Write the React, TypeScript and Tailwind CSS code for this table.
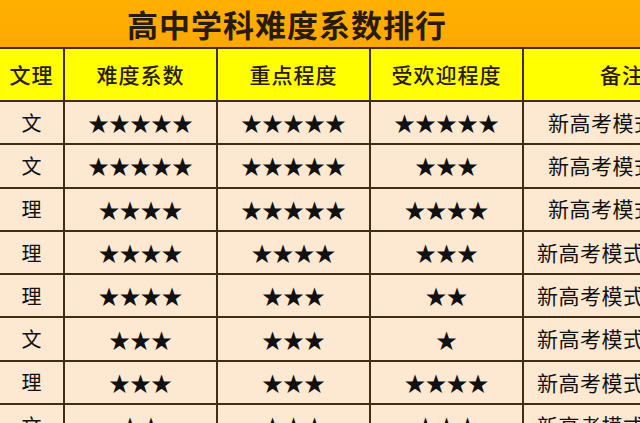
const font = { fontFamily: '"Noto Sans CJK SC", "Noto Sans", sans-serif' };

type Row = { kind: string; diff: number; key: number; pop: number; wide: boolean };

const rows: Row[] = [
  { kind: "文", diff: 5, key: 5, pop: 5, wide: false },
  { kind: "文", diff: 5, key: 5, pop: 3, wide: false },
  { kind: "理", diff: 4, key: 5, pop: 4, wide: false },
  { kind: "理", diff: 4, key: 4, pop: 3, wide: true },
  { kind: "理", diff: 4, key: 3, pop: 2, wide: true },
  { kind: "文", diff: 3, key: 3, pop: 1, wide: true },
  { kind: "理", diff: 3, key: 3, pop: 4, wide: true },
  { kind: "文", diff: 2, key: 3, pop: 3, wide: true },
];

const headers = ["文理", "难度系数", "重点程度", "受欢迎程度"];

function Stars({ n }: { n: number }) {
  return (
    <div className="flex items-center justify-center bg-[#fde8d2] text-[21px] leading-none text-[#111]">
      {"★".repeat(n)}
    </div>
  );
}

export default function App() {
  return (
    <div className="w-[640px] h-[423px] overflow-hidden bg-[#fde8d2]" style={font}>
      <div className="h-[47px] bg-gradient-to-b from-[#ffb000] to-[#ffa800] flex items-center pl-[127px]">
        <h1 className="text-[31px] font-bold text-[#2a1a08] tracking-[1px] leading-none">
          高中学科难度系数排行
        </h1>
      </div>
      <div className="grid grid-cols-[63px_151px_151px_151px_1fr] grid-rows-[51px_repeat(8,41.3px)] gap-[2px] bg-[#3f2e14] pt-[2px] w-[680px]">
        {headers.map((h) => (
          <div key={h} className="flex items-center justify-center bg-[#ffff00] text-[21px] tracking-[1px] font-medium text-[#2a1a08]">
            {h}
          </div>
        ))}
        <div className="flex items-center bg-[#ffff00] text-[21px] tracking-[1px] font-medium text-[#2a1a08] pl-[76px]">
          备注
        </div>
        {rows.map((r, i) => [
          <div key={`k${i}`} className="flex items-center justify-center bg-[#fde8d2] text-[20px] text-[#111]">
            {r.kind}
          </div>,
          <Stars key={`d${i}`} n={r.diff} />,
          <Stars key={`p${i}`} n={r.key} />,
          <Stars key={`o${i}`} n={r.pop} />,
          <div
            key={`m${i}`}
            className={`flex items-center bg-[#fde8d2] text-[21px] tracking-[0.5px] text-[#111] whitespace-nowrap ${r.wide ? "pl-[13px]" : "pl-[24px]"}`}
          >
            新高考模式
          </div>,
        ])}
      </div>
    </div>
  );
}
